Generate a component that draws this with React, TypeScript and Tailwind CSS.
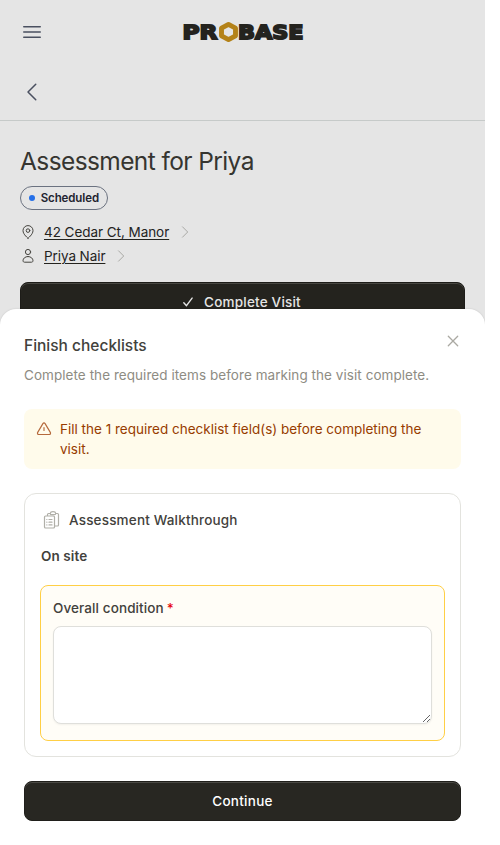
import type { ReactNode } from "react"

type IconProps = {
  className?: string
  size?: number
  strokeWidth?: number
  children: ReactNode
}

function Icon({ className, size = 16, strokeWidth = 1, children }: IconProps) {
  return (
    <svg
      className={className}
      width={size}
      height={size}
      viewBox={`0 0 ${size} ${size}`}
      fill="none"
      stroke="currentColor"
      strokeWidth={strokeWidth}
      strokeLinecap="round"
      strokeLinejoin="round"
    >
      {children}
    </svg>
  )
}

function Logo() {
  return (
    <svg width="128" height="36" viewBox="-4 -8 128 36" className="block">
      <g
        className="font-['DejaVu_Sans'] font-bold"
        fontSize="19.5"
        fill="#24231e"
        stroke="#24231e"
        strokeWidth="1.8"
        strokeLinejoin="miter"
      >
        <text x="-0.5" y="17" textLength="35" lengthAdjust="spacingAndGlyphs">PR</text>
        <text x="55" y="17" textLength="65.5" lengthAdjust="spacingAndGlyphs">BASE</text>
      </g>
      <path
        d="M45.5 2.4 52.5 6.200V13.800L45.500 17.600 38.500 13.800V6.200Z"
        fill="none"
        stroke="#b48218"
        strokeWidth="4.9"
        strokeLinejoin="round"
      />
    </svg>
  )
}

function Page() {
  return (
    <div className="h-full bg-[#e5e5e5]">
      <header className="flex h-16 items-center px-5">
        <Icon size={24} strokeWidth={1.5} className="text-[#4a5060]">
          <path d="M3.75 6.75h16.5M3.75 12h16.5M3.75 17.25h16.5" />
        </Icon>
        <div className="ml-[135px]">
          <Logo />
        </div>
      </header>
      <div className="flex h-[57px] items-center border-b border-[#c6cac9] px-5">
        <Icon size={24} strokeWidth={1.5} className="text-[#4a5060]">
          <path d="M15.75 4.25 8 12l7.75 7.75" />
        </Icon>
      </div>
      <main className="px-5 pt-6">
        <h1 className="text-[24.5px] leading-8 tracking-[-0.6px] text-[#363530]">
          <span>Assessment for Priya</span>
        </h1>
        <div className="mt-[9px] flex h-6 w-[88px] items-center gap-1.5 rounded-full border border-[#6b7280] px-2 text-[11.5px] font-semibold tracking-[-0.1px] text-[#1f2430]">
          <span className="size-1.5 rounded-full bg-[#2570e8]" />
          <span className="pt-px">Scheduled</span>
        </div>
        <div className="mt-2.5 flex h-6 items-center text-[13.5px] text-[#24231e]">
          <Icon className="mr-2 text-[#45443f]">
            <path d="M8 14.2S3 10.6 3 6.6a5 5 0 0 1 10 0C13 10.6 8 14.2 8 14.2Z" />
            <circle cx="8" cy="6.6" r="1.8" />
          </Icon>
          <a className="tracking-[-0.05px] underline underline-offset-2">42 Cedar Ct, Manor</a>
          <Icon className="ml-2 text-[#a9a9a5]">
            <path d="m5.5 2.8 5.2 5.2-5.2 5.2" />
          </Icon>
        </div>
        <div className="flex h-6 items-center text-[13.5px] text-[#24231e]">
          <Icon className="mr-2 text-[#45443f]">
            <circle cx="8" cy="4" r="2.6" />
            <path d="M8 8.5c-3 0-5 2-5 4.3 0 .8.7 1.4 1.5 1.4h7c.8 0 1.5-.6 1.5-1.4 0-2.3-2-4.3-5-4.3Z" />
          </Icon>
          <a className="tracking-[-0.08px] underline underline-offset-2">Priya Nair</a>
          <Icon className="ml-2 text-[#a9a9a5]">
            <path d="m5.5 2.8 5.2 5.2-5.2 5.2" />
          </Icon>
        </div>
        <button className="mt-3.5 flex h-10 w-full items-center justify-center gap-2 rounded-lg border border-[#1d1c18] bg-[#24231e] pr-1 text-[13.5px] font-medium tracking-[0.2px] text-[#e5e5e5] shadow-[inset_0_1px_0_#484742]">
          <Icon strokeWidth={1.4}>
            <path d="m3.8 8.8 2.7 2.9 5.6-7.6" />
          </Icon>
          <span>Complete Visit</span>
        </button>
      </main>
    </div>
  )
}

function Sheet() {
  return (
    <section className="absolute top-[309px] left-0 h-[536px] w-[485px] rounded-t-2xl bg-white p-6 shadow-[0_0_2px_rgba(0,0,0,0.15)]">
      <div className="flex h-6 items-center justify-between">
        <h2 className="pt-px text-[15.5px] leading-6 font-medium text-[#42413c]">
          <span>Finish checklists</span>
        </h2>
        <Icon className="relative -top-1 text-[#aaa9a2]" strokeWidth={1.3}>
          <path d="m3.3 3.3 9.4 9.4M12.7 3.3l-9.4 9.4" />
        </Icon>
      </div>
      <p className="mt-2 text-[13.5px] leading-5 tracking-[0.055px] text-[#8e8c83]">
        <span>Complete the required items before marking the visit complete.</span>
      </p>

      <div className="mt-6 flex h-[60px] gap-2 rounded-lg bg-[#fffbeb] px-3 py-2.5 text-[13.5px] leading-5 text-[#973c00]">
        <Icon className="mt-0.5 shrink-0 text-[#b5693c]" strokeWidth={1.15}>
          <path d="M6.9 2.6 1.7 11.4c-.7 1.2 0 2.1 1.2 2.1h10.2c1.2 0 1.9-.9 1.2-2.1L9.1 2.6c-.6-.9-1.6-.9-2.200 0ZM8 6.500v3" />
        </Icon>
        <p>
          <span>Fill the 1 required checklist field(s) before completing the</span>
          <br />
          <span>visit.</span>
        </p>
      </div>

      <div className="mt-6 h-[264px] rounded-xl border border-[#e3e3de] px-[15px] pt-4">
        <div className="flex h-5 items-center gap-2 px-px text-[13.5px] font-medium tracking-[0.18px] text-[#42413c]">
          <Icon size={20} strokeWidth={1.2} className="text-[#b0afa8]">
            <path d="M6.5 5.500V4.500c0-.6.4-1 1-1h1.800c.3-2.600 5.100-2.600 5.400 0h1.800c.6 0 1 .4 1 1v10.500c0 .6-.4 1-1 1h-2.500M9.300 3.500c0 .7.3 1.200 1 1.200h3.400c.7 0 1-.5 1-1.200" />
            <rect x="3.5" y="6" width="10" height="12" rx="1" />
            <path d="M5.8 9.500h.1M8 9.500h3M5.800 12.200h.1M8 12.200h3M5.800 14.900h.1M8 14.900h3" />
          </Icon>
          <span>Assessment Walkthrough</span>
        </div>
        <h3 className="mt-4 px-px text-[13.5px] leading-5 font-semibold tracking-[0.1px] text-[#42413c]">
          <span>On site</span>
        </h3>
        <div className="mt-[19px] h-[156px] rounded-lg border border-[#ffcf45] bg-[#fffdf7] p-3">
          <label className="block text-[13.5px] leading-5 font-medium tracking-[0.1px] text-[#42413c]">
            <span>Overall condition</span>
            <span className="ml-[3px] text-[#e7000b]">*</span>
          </label>
          <textarea className="mt-2 block h-[98px] w-full rounded-lg border border-[#dfdfdb] bg-white shadow-xs" />
        </div>
      </div>

      <button className="mt-6 flex h-10 w-full items-center justify-center rounded-lg border border-[#201f1b] bg-[#282722] text-[13.5px] font-medium tracking-[0.27px] text-white shadow-[inset_0_1px_0_#4b4a45]">
        <span>Continue</span>
      </button>
    </section>
  )
}

export default function App() {
  return (
    <div className="h-[845px] w-[500px] bg-white font-[Inter,sans-serif]">
      <div className="relative h-full w-[485px] overflow-hidden">
        <Page />
        <Sheet />
      </div>
    </div>
  )
}
